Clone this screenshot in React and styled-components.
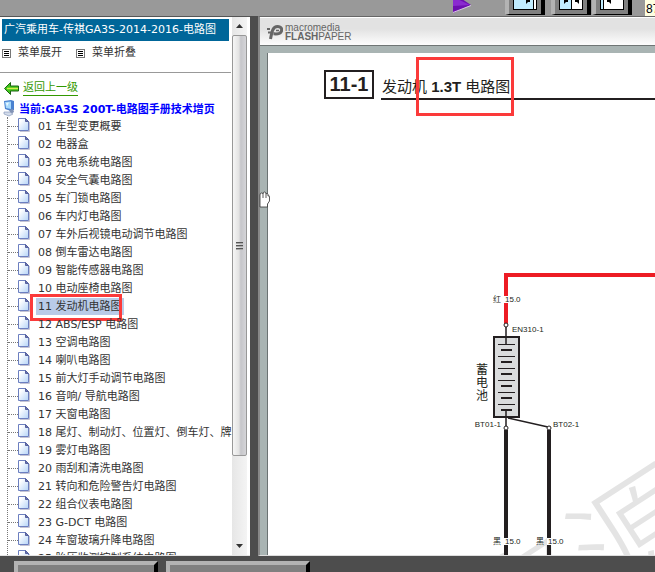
import React, { useState } from "react";
import styled, { createGlobalStyle } from "styled-components";

const GlobalStyle = createGlobalStyle`
  * {
    box-sizing: border-box;
  }
  body {
    margin: 0;
    background: #4d4d4d;
    font-family: "DejaVu Sans", "Noto Sans CJK SC", sans-serif;
    font-size: 11px;
    color: #333;
  }
  button {
    font: inherit;
    color: inherit;
    margin: 0;
    padding: 0;
    border: 0;
    background: none;
  }
  svg {
    display: block;
    flex: none;
  }
`;

const Page = styled.div`
  display: flex;
  flex-direction: column;
  height: 100vh;
  overflow: hidden;
`;

/* top toolbar */
const Toolbar = styled.header`
  display: flex;
  justify-content: flex-end;
  align-items: flex-end;
  height: 16px;
  overflow: hidden;
  background: #999;
`;

const PlayButton = styled.button`
  margin-right: 34px;
  padding-bottom: 3px;
`;

const ToolButton = styled.button`
  flex: none;
  width: 40px;
  margin: 0 ${(props) => props.$gap || 0}px 1px 0;
  padding: 4px;
  border: solid #000;
  border-width: 4px 4px 1px;
  border-left-color: #b3b3b3;
  background: #808080;
`;

const PageNumber = styled.input`
  flex: none;
  width: 10px;
  height: 24px;
  margin-left: 13px;
  padding: 9px 0 0 1px;
  border: 0;
  background: #ffffe1;
  color: #001;
  font: 12px "Liberation Sans", sans-serif;
`;

const Main = styled.main`
  display: flex;
  flex: 1;
  gap: 8px;
  min-height: 0;
`;

/* left menu */
const Sidebar = styled.aside`
  display: flex;
  flex: none;
  width: 250px;
  padding-right: 3px;
  border-top: 1px solid #555;
  border-bottom: 1px solid #e4e4e4;
  background: #fff;
`;

const Menu = styled.nav`
  flex: 1;
  min-width: 0;
  overflow: hidden;
  white-space: nowrap;
`;

const MenuTitle = styled.h1`
  margin: 2px 3px 0 2px;
  padding-left: 2px;
  overflow: hidden;
  background: #069;
  color: #fff;
  font-size: 11px;
  font-weight: normal;
  line-height: 22px;
`;

const MenuActions = styled.div`
  display: flex;
  gap: 14px;
  margin-right: 1px;
  padding: 3px 0 10px 2px;
  border-bottom: 1px solid #999;
`;

const MenuAction = styled.button`
  display: flex;
  align-items: center;
  gap: 7px;
  line-height: 18px;
`;

const BackLink = styled.a`
  display: flex;
  align-items: center;
  gap: 4px;
  margin-top: 7px;
  padding-left: 4px;
  color: #390;
  text-decoration: none;

  span {
    border-bottom: 1px solid #390;
    line-height: 15px;
  }
`;

const Current = styled.h2`
  display: flex;
  align-items: center;
  gap: 4px;
  height: 18px;
  margin: 3px 0 0;
  padding-left: 3px;
  color: #00f;
  font-size: 11px;
`;

const Tree = styled.ul`
  margin: 0 0 0 7px;
  padding: 0;
  border-left: 1px dotted #777;
  list-style: none;
`;

const TreeItem = styled.li`
  position: relative;
  display: flex;
  align-items: center;
  height: 18px;

  &::before {
    content: "";
    flex: none;
    width: 10px;
    border-top: 1px dotted #777;
  }
`;

const TreeLink = styled.a`
  margin-left: 5px;
  padding: 0 2px;
  background: ${(props) => (props.$active ? "#b9cbe8" : "transparent")};
  color: #333;
  line-height: 17px;
  text-decoration: none;
`;

const Mark = styled.span`
  position: absolute;
  border: 3px solid #fb3a3a;
  pointer-events: none;
`;

const ItemMark = styled(Mark)`
  top: -3px;
  left: 22px;
  width: 92px;
  height: 27px;
`;

const TitleMark = styled(Mark)`
  top: -13px;
  left: 35px;
  width: 98px;
  height: 59px;
`;

const Scrollbar = styled.div`
  display: flex;
  flex-direction: column;
  flex: none;
  width: 15px;
  background: linear-gradient(to right, #e6e6e6, #f4f4f4);
`;

const ScrollButton = styled.button`
  display: flex;
  align-items: center;
  justify-content: center;
  height: 18px;
`;

const Thumb = styled.div`
  display: flex;
  flex: 1;
  flex-direction: column;
  align-items: center;
  justify-content: center;
  gap: 1px;
  margin-bottom: 81px;
  border: 1px solid #989898;
  border-radius: 2px;
  background: linear-gradient(to right, #f6f6f6, #e3e3e3 45%, #c6c6ca 60%, #d5d5d8);
`;

const Grip = styled.span`
  width: 7px;
  height: 2px;
  border-top: 1px solid #555;
  background: #aaa;
`;

/* document viewer */
const Viewer = styled.section`
  position: relative;
  display: flex;
  flex: 1;
  flex-direction: column;
  min-width: 0;
  border-top: 1px solid #666;
  border-left: 2px solid #888;
  border-bottom: 1px solid #ddd;
  background: #a9b4b3;
`;

const ViewerBar = styled.div`
  display: flex;
  align-items: center;
  gap: 2px;
  height: 29px;
  padding-left: 7px;
  border-top: 1px solid #fff;
  border-bottom: 1px solid #6f7575;
  background: linear-gradient(#e2e2e2 40%, #fdfdfd);
`;

const Brand = styled.div`
  color: #666;
  font: 10px/9px "Liberation Sans", Arial, sans-serif;
`;

const Paper = styled.article`
  display: flex;
  flex: 1;
  flex-direction: column;
  min-height: 0;
  margin: 7px 0 0 7px;
  padding-top: 17px;
  overflow: hidden;
  border-left: 1px solid #6b7373;
  background: #fff;
`;

const PaperHead = styled.div`
  display: flex;
  gap: 7px;
  flex: none;
  height: 30px;
  padding-left: 56px;
  color: #231f20;
`;

const Section = styled.div`
  width: 50px;
  height: 29px;
  border: 2px solid #231f20;
  font: bold 20px/24px "Liberation Sans", Arial, sans-serif;
  text-align: center;
`;

const PaperTitle = styled.h3`
  position: relative;
  flex: 1;
  margin: 0;
  padding-left: 1px;
  border-bottom: 2px solid #231f20;
  font: 15px/34px "Liberation Sans", "Noto Sans CJK SC", sans-serif;
  white-space: nowrap;
`;

const Diagram = styled.svg`
  flex: 1;
  width: 100%;
  min-height: 0;
  font-family: "Liberation Sans", "Noto Sans CJK SC", sans-serif;
  font-size: 8px;
  fill: #231f20;
`;

const Cursor = styled.svg`
  position: absolute;
  top: 174px;
  left: -1px;
`;

/* bottom bar */
const Footer = styled.footer`
  display: flex;
  gap: 8px;
  height: 16px;
  padding: 5px 14px 0;
  overflow: hidden;
  background: #4d4d4d;
`;

const FooterButton = styled.button`
  flex: none;
  width: 144px;
  height: 32px;
  border: 4px solid #b3b3b3;
  border-right-color: #000;
  border-bottom-color: #000;
  background: #808080;
`;

const items = [
  "车型变更概要",
  "电器盒",
  "充电系统电路图",
  "安全气囊电路图",
  "车门锁电路图",
  "车内灯电路图",
  "车外后视镜电动调节电路图",
  "倒车雷达电路图",
  "智能传感器电路图",
  "电动座椅电路图",
  "发动机电路图",
  "ABS/ESP 电路图",
  "空调电路图",
  "喇叭电路图",
  "前大灯手动调节电路图",
  "音响/ 导航电路图",
  "天窗电路图",
  "尾灯、制动灯、位置灯、倒车灯、牌",
  "雾灯电路图",
  "雨刮和清洗电路图",
  "转向和危险警告灯电路图",
  "组合仪表电路图",
  "G-DCT 电路图",
  "车窗玻璃升降电路图",
  "胎压监测控制系统电路图",
];

function ListIcon() {
  return (
    <svg width="9" height="9">
      <rect x="0.5" y="0.5" width="8" height="8" fill="#fff" stroke="#777" />
      <path d="M2 2.5h5M2 4.5h5M2 6.5h5" stroke="#000" />
    </svg>
  );
}

function DocIcon() {
  return (
    <svg width="13" height="18">
      <defs>
        <linearGradient id="doc" x1="0" y1="0" x2="1" y2="1">
          <stop offset="0.2" stopColor="#fff" />
          <stop offset="1" stopColor="#b5d4f8" />
        </linearGradient>
      </defs>
      <path d="M2 14.5h9.5V5" fill="none" stroke="#c4c4d4" />
      <path d="M0.5 1.5h7l3 3v9h-10z" fill="url(#doc)" stroke="#6c7fc0" />
      <path d="M7.5 1.5v3h3z" fill="#6b78b8" stroke="#56609c" />
    </svg>
  );
}

function BackIcon() {
  return (
    <svg width="15" height="13">
      <path d="M0.5 6.5L6.5 0.5V4H14.5V9H6.5V12.5Z" fill="#3fc51d" stroke="#1c6412" />
      <path d="M3 6.5h11" stroke="#d6f04e" strokeWidth="1.5" />
    </svg>
  );
}

function ComputerIcon() {
  return (
    <svg width="12" height="17">
      <path d="M1 1l7-1 3 1v9l-3 1-6-2z" fill="#4a82d0" />
      <path d="M2 2l6-0.5v7.5l-5-1z" fill="#a5d8fc" />
      <path d="M3 3l3-0.5-2 4z" fill="#e9f8ff" />
      <path d="M6 10l4-1 1 3-3 2z" fill="#8293b5" />
      <path d="M1 12l6 0 3 2-4 2-5-2z" fill="#d2dbea" stroke="#8a9bbd" strokeWidth="0.7" />
    </svg>
  );
}

function FlashIcon() {
  return (
    <svg width="16" height="16" fill="none" stroke="#666">
      <path d="M3.5 15C5 7 6 2.5 10.5 2.5c4 0 5 3 3.5 5.5-1.5 2.5-5 2-7.5 1.8" strokeWidth="3" />
      <path d="M9 6.5h3" strokeWidth="1.5" />
      <path d="M0 5h3M1 8.5h3.5" strokeWidth="2" />
    </svg>
  );
}

// plates of the battery: long line, then a short thick one below it
const cells = [245, 257, 269, 281, 293, 305];

function Wiring() {
  return (
    <Diagram role="img" aria-label="发动机 1.3T 电路图">
      <text
        transform="translate(341 508) rotate(-33)"
        x="-125"
        fontSize="125"
        fontWeight="300"
        fill="#e4e4e4"
      >
        资源
      </text>

      <path d="M238 225V175H2000" fill="none" stroke="#ed1c24" strokeWidth="4" />
      <rect x="236" y="196" width="16" height="7" fill="#fff" />
      <text x="225" y="202">红</text>
      <text x="237" y="202">15.0</text>

      <rect x="226" y="237" width="25" height="80" fill="#dadcdd" stroke="#231f20" strokeWidth="2" />
      <path d="M238 227V244M238 310V328M240 318L280 327" fill="none" stroke="#231f20" strokeWidth="1.5" />
      {cells.map((y) => (
        <g key={y} stroke="#231f20">
          <path d={`M230 ${y - 0.5}h17`} />
          <path d={`M233 ${y + 5}h11`} strokeWidth="2" />
        </g>
      ))}
      <text x="244" y="232">EN310-1</text>
      <text x="233" y="327" textAnchor="end">BT01-1</text>
      <text x="285" y="327">BT02-1</text>
      <g fontSize="12">
        <text x="208" y="274">蓄</text>
        <text x="208" y="287">电</text>
        <text x="208" y="300">池</text>
      </g>

      <path d="M238 330V2000M281 330V2000" stroke="#231f20" strokeWidth="4" />
      <rect x="236" y="438" width="16" height="7" fill="#fff" />
      <rect x="279" y="438" width="16" height="7" fill="#fff" />
      <text x="225" y="444">黑</text>
      <text x="237" y="444">15.0</text>
      <text x="268" y="444">黑</text>
      <text x="280" y="444">15.0</text>

      <g fill="#fff" stroke="#231f20">
        <circle cx="238" cy="225" r="2" />
        <circle cx="238" cy="328" r="2" />
        <circle cx="281" cy="328" r="2" />
      </g>
    </Diagram>
  );
}

function App() {
  let [selected, setSelected] = useState(10);

  return (
    <Page>
      <GlobalStyle />
      <Toolbar>
        <PlayButton aria-label="播放">
          <svg width="18" height="20">
            <path d="M0 0L18 12L0 20Z" fill="#6d0fb0" />
            <path d="M0 4L17 12L0 13Z" fill="#8a2bd0" />
            <path d="M0 19.5L18 12.5" stroke="#d8c8e4" />
          </svg>
        </PlayButton>
        <ToolButton $gap={6} aria-label="右移">
          <svg width="24" height="24">
            <rect x="0.5" y="0.5" width="23" height="23" fill="#fff" stroke="#000" />
            <path d="M1 1h19v22H1z" fill="#c0ecff" />
            <path d="M20.5 0v23" stroke="#000" />
            <path d="M13 12h4v4h-2l-2 2z" />
          </svg>
        </ToolButton>
        <ToolButton $gap={1} aria-label="居中">
          <svg width="24" height="24">
            <rect x="0.5" y="0.5" width="23" height="23" fill="#fff" stroke="#000" />
            <path d="M1 1h11v22H1z" fill="#c0ecff" />
            <path d="M12.5 0v23" stroke="#000" />
            <path d="M5 12h4v4h-2l-2 2zM16 12h4v6l-2-2h-2z" />
          </svg>
        </ToolButton>
        <ToolButton aria-label="左移">
          <svg width="24" height="24">
            <rect x="0.5" y="0.5" width="23" height="23" fill="#fff" stroke="#000" />
            <path d="M1 1h2v22H1z" fill="#c0ecff" />
            <path d="M3.5 0v23" stroke="#000" />
            <path d="M7 12h4v6l-2-2h-2z" />
          </svg>
        </ToolButton>
        <PageNumber aria-label="页码" defaultValue="87" />
      </Toolbar>

      <Main>
        <Sidebar>
          <Menu>
            <MenuTitle>广汽乘用车-传祺GA3S-2014-2016-电路图</MenuTitle>
            <MenuActions>
              <MenuAction>
                <ListIcon />
                菜单展开
              </MenuAction>
              <MenuAction>
                <ListIcon />
                菜单折叠
              </MenuAction>
            </MenuActions>
            <BackLink href="#back">
              <BackIcon />
              <span>返回上一级</span>
            </BackLink>
            <Current>
              <ComputerIcon />
              当前:GA3S 200T-电路图手册技术增页
            </Current>
            <Tree>
              {items.map((name, i) => (
                <TreeItem key={name}>
                  <DocIcon />
                  <TreeLink
                    href={"#" + (i + 1)}
                    $active={selected === i}
                    onClick={() => setSelected(i)}
                  >
                    {String(i + 1).padStart(2, "0")} {name}
                  </TreeLink>
                  {selected === i ? <ItemMark /> : null}
                </TreeItem>
              ))}
            </Tree>
          </Menu>
          <Scrollbar>
            <ScrollButton aria-label="向上滚动">
              <svg width="7" height="4">
                <path d="M0 4L3.5 0L7 4Z" fill="#333" />
              </svg>
            </ScrollButton>
            <Thumb>
              <Grip />
              <Grip />
              <Grip />
            </Thumb>
            <ScrollButton aria-label="向下滚动">
              <svg width="7" height="4">
                <path d="M0 0L3.5 4L7 0Z" fill="#333" />
              </svg>
            </ScrollButton>
          </Scrollbar>
        </Sidebar>

        <Viewer>
          <ViewerBar>
            <FlashIcon />
            <Brand>
              <div>macromedia</div>
              <div>
                <b>FLASH</b>PAPER
              </div>
            </Brand>
          </ViewerBar>
          <Paper>
            <PaperHead>
              <Section>11-1</Section>
              <PaperTitle>
                发动机 <b>1.3T</b> 电路图
                <TitleMark />
              </PaperTitle>
            </PaperHead>
            <Wiring />
          </Paper>
          <Cursor width="11" height="17">
            <path
              d="M1 16V4q0-2 1.5-2T4 3q0-2 1.5-2T7 3q1-1.5 2 0v2q1.5-1 1.5 1v4l-2 3v3z"
              fill="#fff"
              stroke="#333"
              strokeWidth="0.8"
            />
            <path d="M4 3v4M7 3v4" stroke="#333" strokeWidth="0.8" />
          </Cursor>
        </Viewer>
      </Main>

      <Footer>
        <FooterButton aria-label="面板一" />
        <FooterButton aria-label="面板二" />
      </Footer>
    </Page>
  );
}

export default App;
